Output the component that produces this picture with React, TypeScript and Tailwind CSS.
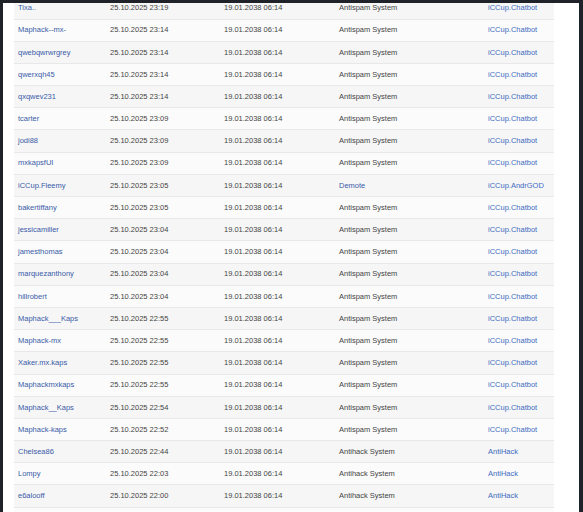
import React from 'react';

type Ban = {
  name: string;
  date: string;
  reason: string;
  by: string;
};

const spam = 'Antispam System';
const hack = 'Antihack System';
const bot = 'iCCup.Chatbot';

const bans: Ban[] = [
  { name: 'Tixa..', date: '25.10.2025 23:19', reason: spam, by: bot },
  { name: 'Maphack--mx-', date: '25.10.2025 23:14', reason: spam, by: bot },
  { name: 'qwebqwrwrgrey', date: '25.10.2025 23:14', reason: spam, by: bot },
  { name: 'qwerxqh45', date: '25.10.2025 23:14', reason: spam, by: bot },
  { name: 'qxqwev231', date: '25.10.2025 23:14', reason: spam, by: bot },
  { name: 'tcarter', date: '25.10.2025 23:09', reason: spam, by: bot },
  { name: 'jodi88', date: '25.10.2025 23:09', reason: spam, by: bot },
  { name: 'mxkapsfUI', date: '25.10.2025 23:09', reason: spam, by: bot },
  { name: 'iCCup.Fleemy', date: '25.10.2025 23:05', reason: 'Demote', by: 'iCCup.AndrGOD' },
  { name: 'bakertiffany', date: '25.10.2025 23:05', reason: spam, by: bot },
  { name: 'jessicamiller', date: '25.10.2025 23:04', reason: spam, by: bot },
  { name: 'jamesthomas', date: '25.10.2025 23:04', reason: spam, by: bot },
  { name: 'marquezanthony', date: '25.10.2025 23:04', reason: spam, by: bot },
  { name: 'hillrobert', date: '25.10.2025 23:04', reason: spam, by: bot },
  { name: 'Maphack___Kaps', date: '25.10.2025 22:55', reason: spam, by: bot },
  { name: 'Maphack-mx', date: '25.10.2025 22:55', reason: spam, by: bot },
  { name: 'Xaker.mx.kaps', date: '25.10.2025 22:55', reason: spam, by: bot },
  { name: 'Maphackmxkaps', date: '25.10.2025 22:55', reason: spam, by: bot },
  { name: 'Maphack__Kaps', date: '25.10.2025 22:54', reason: spam, by: bot },
  { name: 'Maphack-kaps', date: '25.10.2025 22:52', reason: spam, by: bot },
  { name: 'Chelsea86', date: '25.10.2025 22:44', reason: hack, by: 'AntiHack' },
  { name: 'Lompy', date: '25.10.2025 22:03', reason: hack, by: 'AntiHack' },
  { name: 'e6alooff', date: '25.10.2025 22:00', reason: hack, by: 'AntiHack' },
  { name: '', date: '', reason: '', by: '' },
];

const BanRow = ({ ban, index }: { ban: Ban; index: number }) => (
  <div
    className={`grid grid-cols-[92px_114px_115px_149px_70px] items-center h-[22.2px] border-b border-[#e8e8e8] ${
      index % 2 === 0 ? 'bg-[#f6f6f6]' : 'bg-[#fbfbfb]'
    }`}
  >
    <a className="pl-[4px] text-[#3a5ba8] whitespace-nowrap">{ban.name}</a>
    <span className="pl-[4px] text-[#444]">{ban.date}</span>
    <span className="pl-[4px] text-[#444]">{ban.date ? '19.01.2038 06:14' : ''}</span>
    <span className={`pl-[4px] ${ban.reason === 'Demote' ? 'text-[#3a5ba8]' : 'text-[#444]'}`}>
      {ban.reason}
    </span>
    <a className="pl-[4px] text-[#3d6bbf] whitespace-nowrap">{ban.by}</a>
  </div>
);

export default function App() {
  return (
    <div className="w-[583px] h-[512px] overflow-hidden bg-[#1f2229] pt-[3px] pl-[3px] pr-[4px]">
      <div className="h-[509px] overflow-hidden bg-white pl-[11px]">
        <div
          className="w-[540px] -mt-[5.7px] text-[7.5px] leading-none"
          style={{ fontFamily: '"Liberation Sans", Arial, sans-serif' }}
        >
          {bans.map((ban, i) => (
            <BanRow key={i} ban={ban} index={i} />
          ))}
        </div>
      </div>
    </div>
  );
}
